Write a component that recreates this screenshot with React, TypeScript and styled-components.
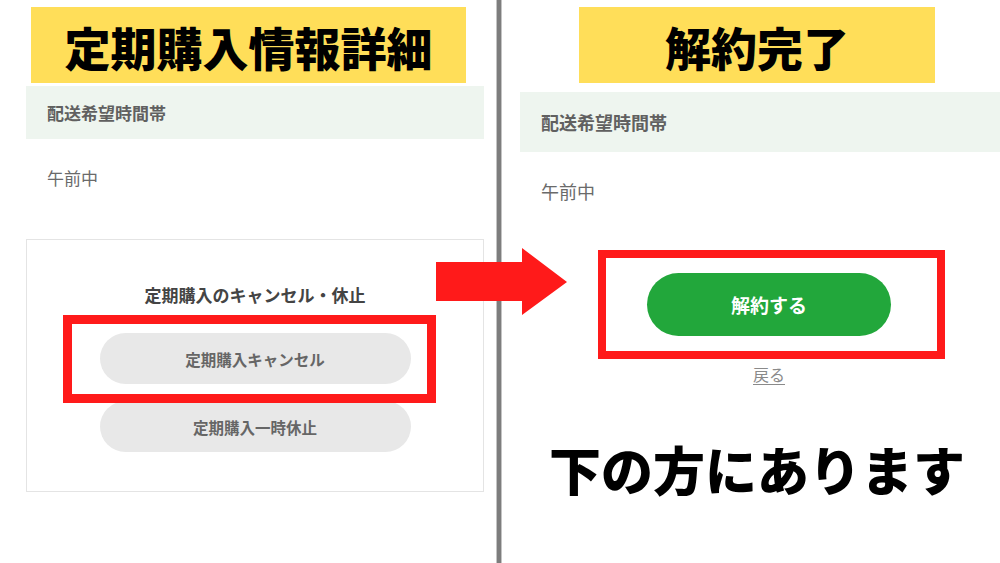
import React from 'react';
import styled, { createGlobalStyle } from 'styled-components';

const GlobalStyle = createGlobalStyle`
    html, body {
        margin: 0;
        padding: 0;
        background: #ffffff;
    }
    body {
        font-family: "Noto Sans CJK JP", "Noto Sans", sans-serif;
    }
    * {
        box-sizing: border-box;
    }
`

const Page = styled.main`
    position: relative;
    width: 1000px;
    height: 563px;
    display: flex;
    overflow: hidden;
    background: #ffffff;
`

const Panel = styled.section<{ $side: 'left' | 'right' }>`
    display: flex;
    flex-direction: column;
    padding-top: 7px;
    ${({ $side }) => $side === 'left'
        ? 'width: 497px; padding-left: 26px; padding-right: 13px;'
        : 'flex: 1; padding-left: 19px;'}
`

const Divider = styled.div`
    width: 4px;
    height: 100%;
    background: #7d7d7d;
    box-shadow: 0 0 0 1px #c4c4c4;
`

const Label = styled.h1<{ $width: number; $offset: number }>`
    margin: 0 0 0 ${({ $offset }) => $offset}px;
    width: ${({ $width }) => $width}px;
    height: 76px;
    display: flex;
    align-items: center;
    justify-content: center;
    background: #ffde59;
    color: #000000;
    font-size: 46px;
    font-weight: 900;
    line-height: 1;
    padding-top: 2px;
`

const Band = styled.div<{ $top: number; $height: number; $size: number }>`
    margin-top: ${({ $top }) => $top}px;
    height: ${({ $height }) => $height}px;
    display: flex;
    align-items: center;
    padding-left: 21px;
    background: #eef5ef;
    color: #606060;
    font-size: ${({ $size }) => $size}px;
    font-weight: 700;
`

const Value = styled.p<{ $size: number }>`
    margin: 27px 0 0 21px;
    line-height: 24px;
    color: #6a6a6a;
    font-size: ${({ $size }) => $size}px;
`

const Card = styled.div`
    margin-top: 49px;
    height: 253px;
    border: 1px solid #e4e4e4;
    display: flex;
    flex-direction: column;
    align-items: center;
    padding-top: 43px;
`

const CardTitle = styled.h2`
    margin: 0 0 26px;
    font-size: 17px;
    line-height: 24px;
    font-weight: 700;
    color: #444444;
`

const ButtonWrap = styled.div`
    position: relative;
`

const GrayButton = styled.button`
    width: 311px;
    height: 51px;
    border: none;
    border-radius: 26px;
    background: #e8e8e8;
    color: #666666;
    font-family: inherit;
    font-size: 15.5px;
    font-weight: 700;
    display: flex;
    align-items: center;
    justify-content: center;
`

const ButtonStack = styled.div`
    display: flex;
    flex-direction: column;
    gap: 17px;
`

const Frame = styled.div<{ $t: number; $r: number; $b: number; $l: number; $w: number }>`
    position: absolute;
    top: ${({ $t }) => -$t}px;
    right: ${({ $r }) => -$r}px;
    bottom: ${({ $b }) => -$b}px;
    left: ${({ $l }) => -$l}px;
    border: ${({ $w }) => $w}px solid #ff1a1a;
    z-index: 1;
    pointer-events: none;
`

const Actions = styled.div`
    margin-top: 70px;
    padding-left: 18px;
    display: flex;
    flex-direction: column;
    align-items: center;
`

const GreenButton = styled.button`
    width: 244px;
    height: 63px;
    border: none;
    border-radius: 32px;
    background: #22a73b;
    color: #ffffff;
    font-family: inherit;
    font-size: 19px;
    font-weight: 700;
    display: flex;
    align-items: center;
    justify-content: center;
`

const BackLink = styled.a`
    margin-top: 27px;
    line-height: 22px;
    font-size: 16px;
    color: #8a8a8a;
    text-decoration: underline;
    text-underline-offset: 3px;
`

const Note = styled.p`
    margin: 54px 0 0;
    padding-right: 6px;
    text-align: center;
    font-size: 52px;
    line-height: 60px;
    font-weight: 900;
    color: #000000;
`

const Arrow = styled.svg`
    position: absolute;
    left: 436px;
    top: 248px;
    z-index: 2;
`

const App = () => {
    return (
        <Page>
            <GlobalStyle />
            <Panel $side='left'>
                <Label $width={435} $offset={5}>定期購入情報詳細</Label>
                <Band $top={3} $height={53} $size={17}>配送希望時間帯</Band>
                <Value $size={17}>午前中</Value>
                <Card>
                    <CardTitle>定期購入のキャンセル・休止</CardTitle>
                    <ButtonStack>
                        <ButtonWrap>
                            <GrayButton>定期購入キャンセル</GrayButton>
                            <Frame $t={18} $r={25} $b={19} $l={37} $w={9} />
                        </ButtonWrap>
                        <GrayButton>定期購入一時休止</GrayButton>
                    </ButtonStack>
                </Card>
            </Panel>

            <Divider />

            <Panel $side='right'>
                <Label $width={356} $offset={59}>解約完了</Label>
                <Band $top={9} $height={60} $size={18}>配送希望時間帯</Band>
                <Value $size={18}>午前中</Value>
                <Actions>
                    <ButtonWrap>
                        <GreenButton>解約する</GreenButton>
                        <Frame $t={23} $r={54} $b={23} $l={49} $w={8} />
                    </ButtonWrap>
                    <BackLink>戻る</BackLink>
                </Actions>
                <Note>下の方にあります</Note>
            </Panel>

            {/* 矢印 */}
            <Arrow width="131" height="67" viewBox="0 0 131 67">
                <polygon points="0,14 86,14 86,0 131,34 86,67 86,53 0,53" fill="#ff1a1a" />
            </Arrow>
        </Page>
    )
}

export default App;
